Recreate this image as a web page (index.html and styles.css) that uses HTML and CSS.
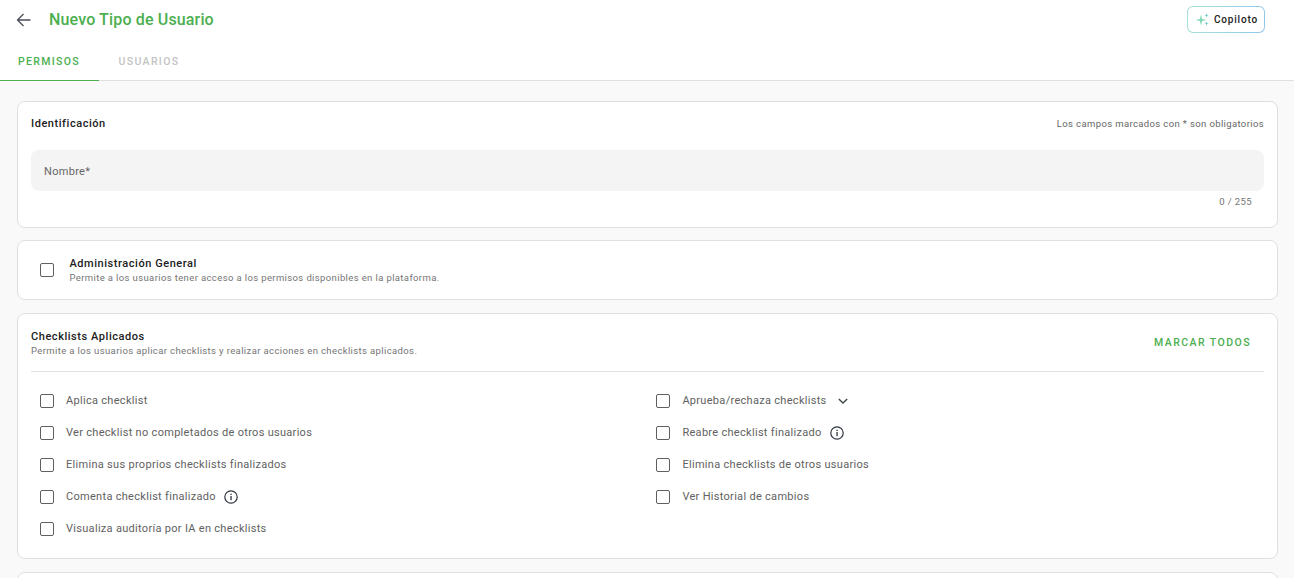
FILE: index.html
```html
<!DOCTYPE html>
<html lang="es">
<head>
<meta charset="utf-8">
<title>Nuevo Tipo de Usuario</title>
<link rel="stylesheet" href="styles.css">
</head>
<body>
<header class="top">
  <div class="title-row">
    <button class="back" aria-label="Volver">
      <svg width="24" height="24" viewBox="0 0 24 24"><path d="M18.500 12H5.500M11.500 6l-6 6 6 6" class="back-path"/></svg>
    </button>
    <h1 class="title">Nuevo Tipo de Usuario</h1>
    <button class="copilot">
      <svg width="16" height="16" viewBox="0 0 16 16"><path d="M6 2.500 7.100 6.900 11.500 8 7.100 9.100 6 13.500 4.900 9.100.5 8 4.900 6.900z" fill="#82d8b6"/><path d="M11.500 1.500l.6 1.400 1.400.6-1.400.6-.6 1.400-.6-1.400-1.400-.6 1.400-.6zM11.500 9.500l.6 1.400 1.400.6-1.400.6-.6 1.400-.6-1.400-1.400-.6 1.400-.6z" fill="#6fcbc6"/></svg>
      <span>Copiloto</span>
    </button>
  </div>
  <nav class="tabs">
    <a class="tab tab-active">PERMISOS</a>
    <a class="tab">USUARIOS</a>
  </nav>
</header>
<main class="content">
  <section class="card card-id">
    <div class="id-head">
      <h2 class="card-title">Identificación</h2>
      <span class="hint">Los campos marcados con * son obligatorios</span>
    </div>
    <div class="field"><span>Nombre*</span></div>
    <div class="counter">0 / 255</div>
  </section>

  <section class="card card-admin">
    <span class="box"></span>
    <div class="admin-text">
      <h2 class="card-title">Administración General</h2>
      <p class="desc">Permite a los usuarios tener acceso a los permisos disponibles en la plataforma.</p>
    </div>
  </section>

  <section class="card card-check">
    <div class="check-head">
      <div>
        <h2 class="card-title">Checklists Aplicados</h2>
        <p class="desc">Permite a los usuarios aplicar checklists y realizar acciones en checklists aplicados.</p>
      </div>
      <button class="mark-all">MARCAR TODOS</button>
    </div>
    <div class="perm-grid">
      <label class="perm"><span class="box"></span><span class="perm-text">Aplica checklist</span></label>
      <label class="perm"><span class="box"></span><span class="perm-text">Aprueba/rechaza checklists</span>
        <svg class="chev" width="20" height="20" viewBox="0 0 24 24"><path d="M7 9.500l5 5 5-5" fill="none" stroke="#3f4a4a" stroke-width="1.700"/></svg></label>
      <label class="perm"><span class="box"></span><span class="perm-text">Ver checklist no completados de otros usuarios</span></label>
      <label class="perm"><span class="box"></span><span class="perm-text">Reabre checklist finalizado</span>
        <svg class="info" width="16" height="16" viewBox="0 0 16 16"><circle cx="8" cy="8" r="6.200" fill="none" stroke="#2f3640" stroke-width="1.200"/><rect x="7.400" y="7" width="1.300" height="4.200" fill="#2f3640"/><rect x="7.400" y="4.700" width="1.300" height="1.300" fill="#2f3640"/></svg></label>
      <label class="perm"><span class="box"></span><span class="perm-text">Elimina sus proprios checklists finalizados</span></label>
      <label class="perm"><span class="box"></span><span class="perm-text">Elimina checklists de otros usuarios</span></label>
      <label class="perm"><span class="box"></span><span class="perm-text">Comenta checklist finalizado</span>
        <svg class="info" width="16" height="16" viewBox="0 0 16 16"><circle cx="8" cy="8" r="6.200" fill="none" stroke="#2f3640" stroke-width="1.200"/><rect x="7.400" y="7" width="1.300" height="4.200" fill="#2f3640"/><rect x="7.400" y="4.700" width="1.300" height="1.300" fill="#2f3640"/></svg></label>
      <label class="perm"><span class="box"></span><span class="perm-text">Ver Historial de cambios</span></label>
      <label class="perm"><span class="box"></span><span class="perm-text">Visualiza auditoría por IA en checklists</span></label>
    </div>
  </section>

  <section class="card card-next"></section>
</main>
</body>
</html>
```
FILE: styles.css
```css
* { box-sizing: border-box; }
html, body { height: 100%; }
body {
  margin: 0;
  height: 578px;
  overflow: hidden;
  background: #f9f9f9;
  font-family: Roboto, "Liberation Sans", sans-serif;
  color: #212121;
}
button { font-family: inherit; background: none; border: 0; padding: 0; }

.top { background: #fff; border-bottom: 1px solid #e0e0e0; height: 81px; }
.title-row { display: flex; align-items: center; height: 39px; padding: 0 29px 0 12px; }
.back { width: 24px; height: 24px; display: flex; }
.back-path { fill: none; stroke: #4a4f57; stroke-width: 1.300; }
.title { margin: 0 0 0 13px; font-size: 16px; line-height: 24px; font-weight: 500; color: #4caf50; letter-spacing: .15px; flex: 1; }
.copilot {
  display: flex; align-items: center; gap: 3px;
  width: 78px; height: 27px; padding-left: 7px;
  border: 1px solid transparent; border-radius: 6px;
  background: linear-gradient(#fff, #fff) padding-box, linear-gradient(90deg, #a5dfd5, #90c8ee) border-box;
  font-size: 10px; font-weight: 500; letter-spacing: .8px; color: #212121;
}
.copilot span { padding-bottom: 1px; }
.tabs { display: flex; height: 41px; }
.tab {
  width: 98px; height: 41px; display: flex; align-items: center; justify-content: center;
  font-size: 10.500px; font-weight: 500; letter-spacing: 1.350px; color: #c4c4c4;
  padding: 4px 1px 0 0;
}
.tab + .tab { width: 101px; }
.tab-active { width: 99px; color: #4caf50; border-bottom: 1px solid #4caf50; height: 42px; padding: 3px 1px 0 0; }

.content { padding: 20px 16px 0 17px; display: flex; flex-direction: column; }
.card { background: #fff; border: 1px solid #e0e0e0; border-radius: 8px; }
.card-title { margin: 0; font-size: 11px; line-height: 14px; font-weight: 500; letter-spacing: .55px; color: #212121; }
.desc { margin: 0; font-size: 9.500px; line-height: 14px; letter-spacing: .375px; color: #757575; }

.card-id { height: 127px; padding: 14px 13px 0; }
.id-head { display: flex; justify-content: space-between; align-items: center; height: 15px; }
.hint { font-size: 9.500px; letter-spacing: .37px; color: #666; }
.field { margin-top: 19px; height: 41px; background: #f4f4f4; border-radius: 8px; padding: 2px 13px 0; display: flex; align-items: center; font-size: 11px; font-weight: 400; letter-spacing: .3px; color: #666; }
.counter { margin-top: 4px; padding-right: 12px; text-align: right; font-size: 9.500px; line-height: 14px; letter-spacing: .4px; color: #757575; }

.card-admin { margin-top: 12px; height: 60px; display: flex; align-items: center; padding-left: 22px; gap: 15.500px; }
.admin-text { padding-top: 2px; }
.box { width: 14px; height: 14px; border: 1px solid #5f5f5f; border-radius: 2px; flex: none; background: #fff; }

.card-check { margin-top: 13px; height: 246px; padding: 0 13px; }
.check-head { height: 58px; border-bottom: 1px solid #e0e0e0; display: flex; justify-content: space-between; align-items: flex-start; padding-top: 16px; }
.mark-all { margin-top: 6px; padding-right: 13px; font-size: 10.500px; font-weight: 500; letter-spacing: 1.450px; color: #4caf50; line-height: 14px; }

.perm-grid { display: grid; grid-template-columns: 616.4px 1fr; grid-auto-rows: 32px; padding: 13px 0 0 9px; }
.perm { display: flex; align-items: center; font-size: 11px; letter-spacing: .3px; color: #616161; }
.perm .box { margin-right: 12px; }
.perm-text { padding-bottom: 2px; }
.chev { margin-left: 6px; }
.info { margin-left: 7px; }

.card-next { margin-top: 13px; height: 40px; }
```
